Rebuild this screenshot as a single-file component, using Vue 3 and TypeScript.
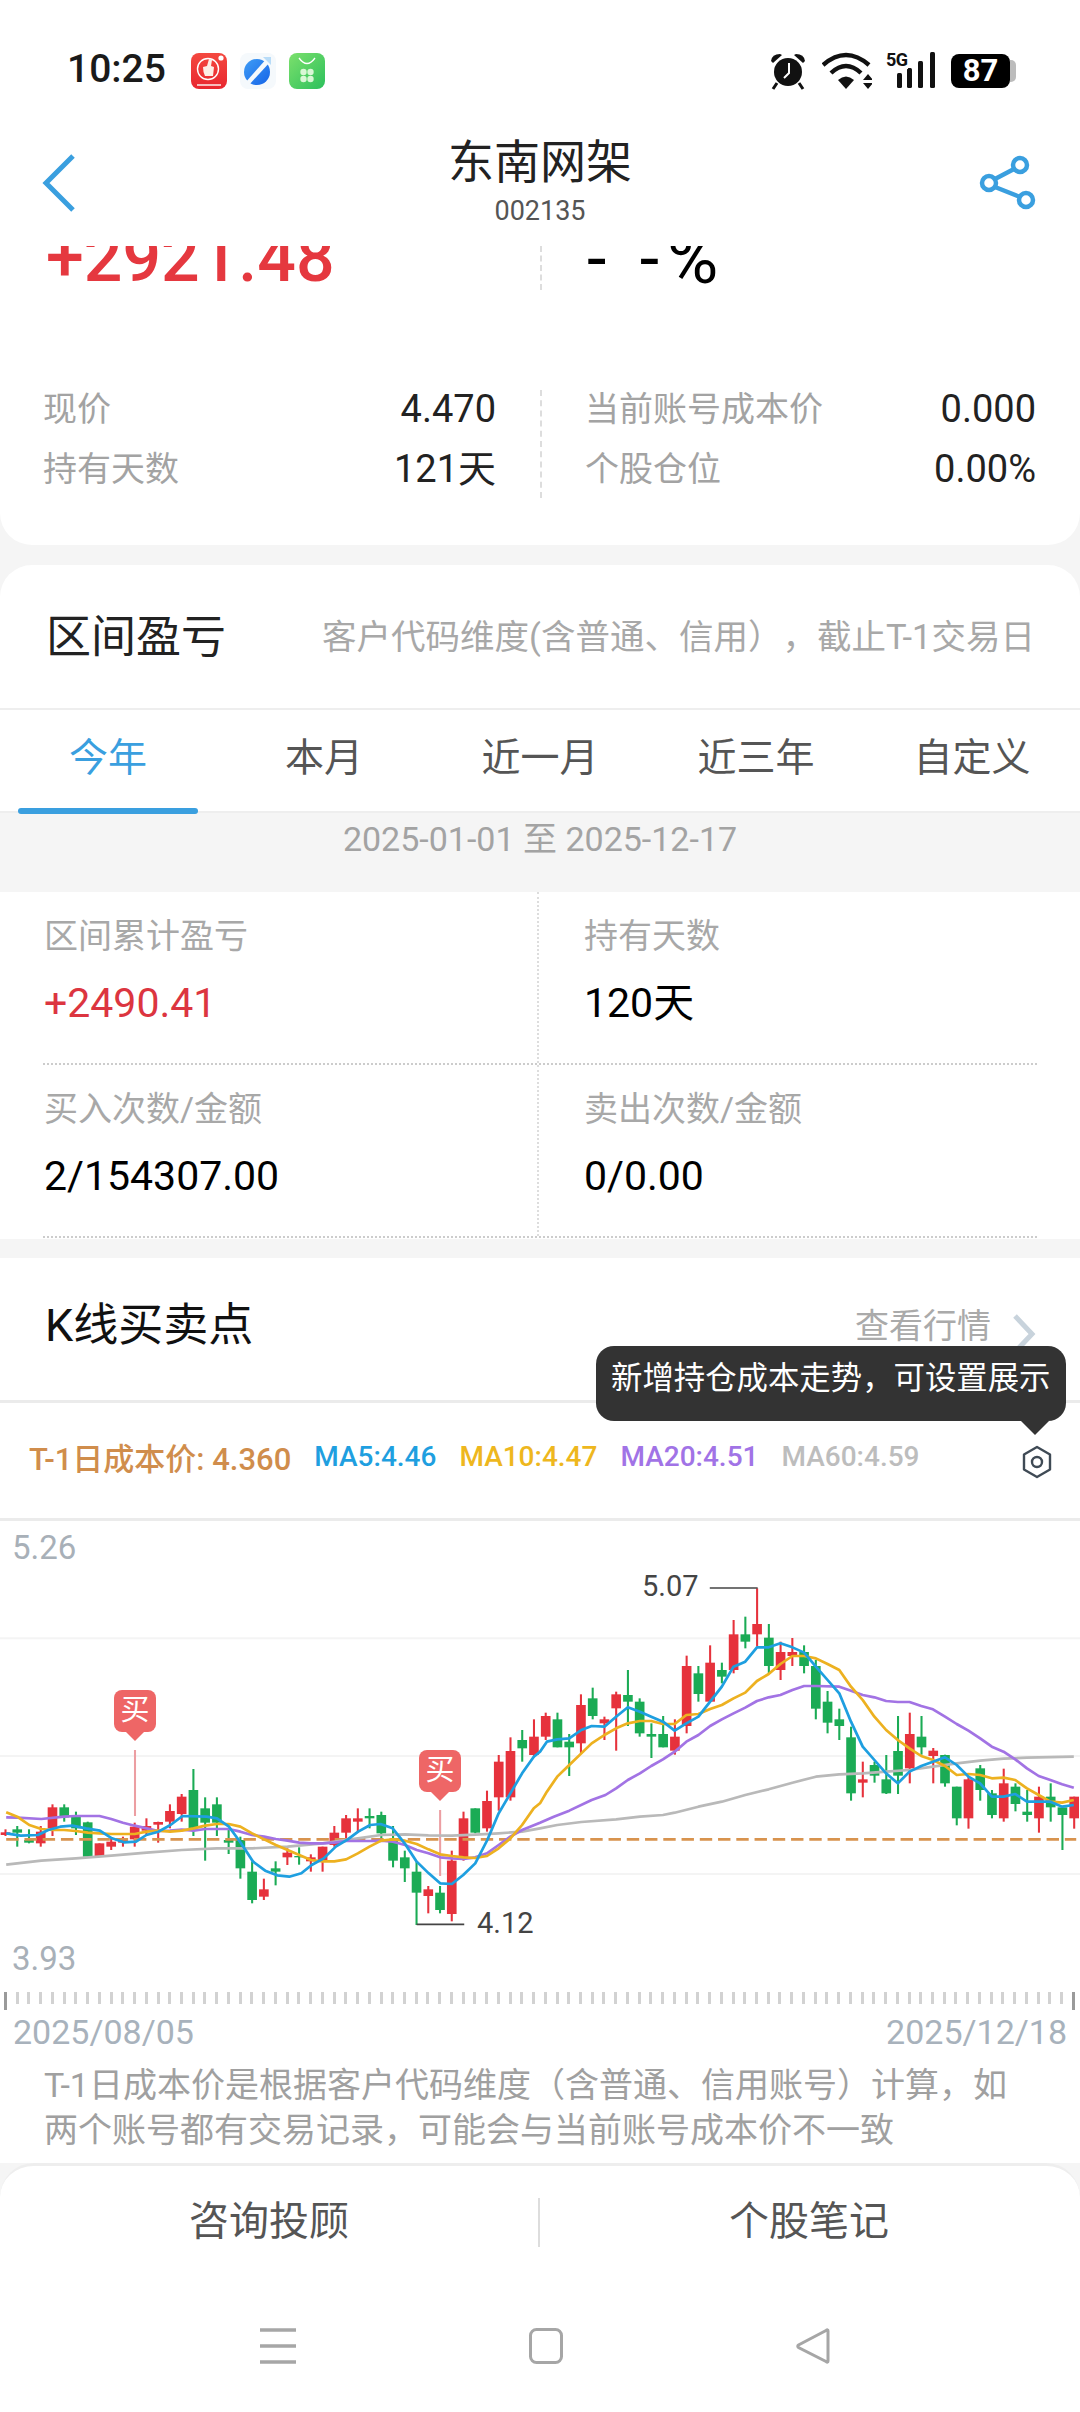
<template>
  <div class="page">
    <div class="status">
      <span class="time">10:25</span>
      <svg class="app-icon" width="36" height="36" viewBox="0 0 36 36">
        <defs>
          <linearGradient id="redIcon" x1="0" y1="0" x2="0" y2="1">
            <stop offset="0" stop-color="#f4483f" />
            <stop offset="1" stop-color="#e8262f" />
          </linearGradient>
        </defs>
        <rect width="36" height="36" rx="8" fill="url(#redIcon)" />
        <circle cx="17" cy="16" r="10.5" fill="none" stroke="#fff" stroke-width="1.4" />
        <path d="M12 14 L16 13 L18 6 L21 7 L20 13 L23 14 L22 23 L14 23 Q12 19 12 14Z" fill="#fdeee6" />
        <circle cx="30" cy="5" r="2.6" fill="#fff" />
        <rect x="6" y="31" width="24" height="2" fill="#f7bcbc" />
      </svg>
      <svg class="app-icon" width="36" height="36" viewBox="0 0 36 36">
        <defs>
          <linearGradient id="blueIcon" x1="0" y1="0" x2="1" y2="1">
            <stop offset="0" stop-color="#3f9df5" />
            <stop offset="1" stop-color="#1664e8" />
          </linearGradient>
        </defs>
        <rect width="36" height="36" rx="8" fill="#f5f9fc" />
        <circle cx="17" cy="19" r="13" fill="url(#blueIcon)" />
        <path d="M31 4 L28 4 L5 30 L8 33 L31 8Z" fill="#f5f9fc" />
        <path d="M23 4 L31 4 L31 12Z" fill="#b8dcf8" />
      </svg>
      <svg class="app-icon" width="36" height="36" viewBox="0 0 36 36">
        <defs>
          <linearGradient id="greenIcon" x1="0" y1="0" x2="1" y2="1">
            <stop offset="0" stop-color="#7ce06c" />
            <stop offset="1" stop-color="#2cc05c" />
          </linearGradient>
        </defs>
        <rect width="36" height="36" rx="8" fill="url(#greenIcon)" />
        <path d="M10 5 Q18 16 26 5" fill="none" stroke="#fff" stroke-width="1.3" />
        <circle cx="14.5" cy="19" r="3.2" fill="#d9f7d6" />
        <circle cx="21.5" cy="19" r="3.2" fill="#d9f7d6" />
        <circle cx="14.5" cy="26" r="3.2" fill="#d9f7d6" />
        <circle cx="21.5" cy="26" r="3.2" fill="#d9f7d6" />
      </svg>
      <div class="status-right">
        <svg class="alarm" width="38" height="38" viewBox="0 0 38 38">
          <circle cx="19" cy="20" r="14" fill="#111" />
          <path d="M2 9 Q3 2 11 2 L13 3 L4 11Z" fill="#111" />
          <path d="M36 9 Q35 2 27 2 L25 3 L34 11Z" fill="#111" />
          <path d="M8 31 L4 37 M30 31 L34 37" stroke="#111" stroke-width="3" />
          <path d="M20 11 L20 21 L15 26" fill="none" stroke="#fff" stroke-width="2" />
        </svg>
        <svg class="wifi" width="50" height="38" viewBox="0 0 50 38">
          <path d="M1 13 Q24 -7 47 13" fill="none" stroke="#111" stroke-width="4.4" />
          <path d="M9 21 Q24 7 39 21" fill="none" stroke="#111" stroke-width="4.4" />
          <path d="M16 28 L24 37 L32 28 Q24 21 16 28Z" fill="#111" />
          <path d="M41 28 L46 22 L51 28Z M41 31 L51 31 L46 37Z" fill="#111" />
        </svg>
        <div class="signal">
          <span class="net">5G</span>
          <svg width="40" height="36" viewBox="0 0 40 36">
            <rect x="0" y="21" width="5" height="15" rx="1.5" fill="#111" />
            <rect x="10" y="16" width="5" height="20" rx="1.5" fill="#111" />
            <rect x="21" y="9" width="5" height="27" rx="1.5" fill="#111" />
            <rect x="33" y="0" width="5" height="36" rx="1.5" fill="#111" />
          </svg>
        </div>
        <div class="battery"><span>87</span></div>
        <span class="battery-cap"></span>
      </div>
    </div>

    <header class="nav-bar">
      <svg class="back" width="34" height="58" viewBox="0 0 34 58">
        <path d="M31 2 L4 29 L31 56" fill="none" stroke="#3a9fdf" stroke-width="5" />
      </svg>
      <div class="title-box">
        <div class="title">东南网架</div>
        <div class="code">002135</div>
      </div>
      <svg class="share" width="58" height="56" viewBox="0 0 58 56">
        <circle cx="41" cy="10" r="7" fill="none" stroke="#3a9fdf" stroke-width="4.5" />
        <circle cx="10" cy="28" r="7" fill="none" stroke="#3a9fdf" stroke-width="4.5" />
        <circle cx="47" cy="45" r="7" fill="none" stroke="#3a9fdf" stroke-width="4.5" />
        <path d="M16 24 L35 14 M16 32 L41 42" stroke="#3a9fdf" stroke-width="4.5" />
      </svg>
    </header>

    <section class="holding">
      <div class="big-row">
        <div class="big-cell"><span class="big-num">+2921.48</span></div>
        <div class="big-cell right"><span class="big-rate">- -%</span></div>
      </div>
      <div class="detail">
        <div class="detail-col">
          <div class="detail-row"><span class="muted">现价</span><span>4.470</span></div>
          <div class="detail-row"><span class="muted">持有天数</span><span>121天</span></div>
        </div>
        <div class="detail-col right">
          <div class="detail-row"><span class="muted">当前账号成本价</span><span>0.000</span></div>
          <div class="detail-row"><span class="muted">个股仓位</span><span>0.00%</span></div>
        </div>
      </div>
    </section>

    <section class="range">
      <div class="range-head">
        <span class="sec-title">区间盈亏</span>
        <span class="range-tip">客户代码维度(含普通、信用），截止T-1交易日</span>
      </div>
      <div class="tabs">
        <div v-for="(tab, i) in tabs" :key="tab" class="tab" :class="{ active: i === 0 }">{{ tab }}</div>
      </div>
      <div class="date-band">2025-01-01 至 2025-12-17</div>
      <div class="stats">
        <div v-for="row in statRows" :key="row[0].label" class="stat-row">
          <div v-for="cell in row" :key="cell.label" class="stat">
            <div class="stat-label">{{ cell.label }}</div>
            <div class="stat-value" :class="{ up: cell.up }">{{ cell.value }}</div>
          </div>
        </div>
      </div>
    </section>

    <section class="kline">
      <div class="kline-head">
        <span class="sec-title dark">K线买卖点</span>
        <div class="more">
          <span>查看行情</span>
          <svg width="24" height="40" viewBox="0 0 24 40">
            <path d="M3 2 L20 20 L3 38" fill="none" stroke="#c8d3dc" stroke-width="5" />
          </svg>
        </div>
      </div>
      <div class="ma-row">
        <span class="cost">T-1日成本价: 4.360</span>
        <span v-for="ma in maLabels" :key="ma.text" :style="{ color: ma.color }">{{ ma.text }}</span>
        <svg class="hex" width="30" height="34" viewBox="0 0 30 34">
          <path d="M15 2 L28 9.5 L28 24.5 L15 32 L2 24.5 L2 9.5Z" fill="none" stroke="#3f4a55" stroke-width="2.4" stroke-linejoin="round" />
          <circle cx="15" cy="17" r="5" fill="none" stroke="#3f4a55" stroke-width="2.4" />
        </svg>
      </div>
      <div class="tooltip">新增持仓成本走势，可设置展示</div>

      <div class="chart">
        <svg class="plot" viewBox="0 3 3136 1413" preserveAspectRatio="none">
          <line v-for="y in [355, 708, 1062]" :key="y" x1="0" x2="3136" :y1="y" :y2="y" stroke="#f4f4f4" stroke-width="6" />
          <line x1="392" x2="392" y1="690" y2="888" stroke="#ec9ea2" stroke-width="6" />
          <line x1="1278" x2="1278" y1="870" y2="1068" stroke="#ec9ea2" stroke-width="6" />
          <g v-for="(c, i) in candles" :key="i" :fill="c[4] ? '#e6323c' : '#1bab55'">
            <rect :x="candleX(i) - 3" :y="c[0]" width="6" :height="c[1] - c[0]" />
            <rect :x="candleX(i) - 14" :y="c[2]" width="28" :height="c[3] - c[2]" />
          </g>
          <line x1="18" x2="3125" y1="958" y2="958" stroke="#d8934e" stroke-width="8" stroke-dasharray="36 17" />
          <polyline
            v-for="line in maLines"
            :key="line.color"
            :points="line.points"
            fill="none"
            :stroke="line.color"
            stroke-width="8"
            stroke-linejoin="round"
          />
          <line x1="2061" x2="2200" y1="204" y2="204" stroke="#444" stroke-width="5" />
          <line x1="1210" x2="1348" y1="1213" y2="1213" stroke="#444" stroke-width="5" />
        </svg>
        <span class="axis high">5.26</span>
        <span class="axis low">3.93</span>
        <span class="peak max">5.07</span>
        <span class="peak min">4.12</span>
        <div class="buy first">买</div>
        <div class="buy second">买</div>
      </div>

      <div class="ticks">
        <span v-for="n in 92" :key="n" class="tick" :class="{ edge: n === 1 || n === 92 }"></span>
      </div>
      <div class="dates"><span>2025/08/05</span><span>2025/12/18</span></div>
      <p class="note">T-1日成本价是根据客户代码维度（含普通、信用账号）计算，如两个账号都有交易记录，可能会与当前账号成本价不一致</p>
    </section>

    <footer class="bottom">
      <div class="actions">
        <div class="action">咨询投顾</div>
        <span class="action-line"></span>
        <div class="action">个股笔记</div>
      </div>
      <div class="sys-nav">
        <svg width="36" height="36" viewBox="0 0 36 36">
          <path d="M0 2 H36 M0 18 H36 M0 34 H36" stroke="#a6a6a6" stroke-width="3.6" />
        </svg>
        <svg width="34" height="36" viewBox="0 0 34 36">
          <rect x="1.5" y="1.5" width="31" height="33" rx="6" fill="none" stroke="#a6a6a6" stroke-width="3" />
        </svg>
        <svg width="34" height="36" viewBox="0 0 34 36">
          <path d="M32 3 Q32 1 30 2.5 L2.5 17 Q1 18 2.5 19.5 L30 33.5 Q32 35 32 33Z" fill="none" stroke="#a6a6a6" stroke-width="3" />
        </svg>
      </div>
    </footer>
  </div>
</template>

<script setup lang="ts">
interface Stat {
  label: string
  value: string
  up?: boolean
}

// [wick top, wick bottom, body top, body bottom, 1 = red]
type Candle = [number, number, number, number, number]

const tabs = ['今年', '本月', '近一月', '近三年', '自定义']

const statRows: Stat[][] = [
  [
    { label: '区间累计盈亏', value: '+2490.41', up: true },
    { label: '持有天数', value: '120天' }
  ],
  [
    { label: '买入次数/金额', value: '2/154307.00' },
    { label: '卖出次数/金额', value: '0/0.00' }
  ]
]

const maLabels = [
  { text: 'MA5:4.46', color: '#1f9fe0' },
  { text: 'MA10:4.47', color: '#eeb71e' },
  { text: 'MA20:4.51', color: '#a173e6' },
  { text: 'MA60:4.59', color: '#bdbdbd' }
]

const candles: Candle[] = [
  [928, 948, 937, 945, 1], [918, 980, 928, 938, 0], [928, 970, 960, 968, 0], [918, 980, 935, 970, 1],
  [853, 948, 862, 925, 1], [853, 905, 862, 892, 0], [875, 945, 890, 925, 0], [905, 1012, 907, 1010, 0],
  [970, 1010, 970, 1008, 1], [955, 990, 965, 980, 1], [950, 980, 955, 968, 1], [908, 980, 920, 958, 1],
  [895, 945, 918, 932, 1], [905, 968, 906, 914, 1], [853, 925, 873, 905, 1], [822, 905, 830, 882, 1],
  [747, 948, 810, 925, 0], [832, 1022, 865, 908, 0], [832, 948, 853, 908, 0], [930, 1002, 960, 968, 0],
  [950, 1076, 960, 1045, 0], [1024, 1150, 1055, 1140, 0], [1076, 1140, 1108, 1130, 1], [1024, 1096, 1045, 1055, 0],
  [985, 1035, 998, 1012, 1], [982, 1034, 1008, 1012, 0], [1003, 1055, 1012, 1024, 1], [980, 1055, 980, 1022, 1],
  [918, 980, 938, 975, 1], [885, 955, 895, 938, 1], [865, 938, 895, 905, 1], [865, 925, 888, 895, 0],
  [875, 960, 885, 940, 0], [918, 1042, 960, 1022, 0], [992, 1086, 1012, 1045, 0], [1024, 1215, 1055, 1118, 0],
  [1098, 1180, 1108, 1128, 1], [1098, 1180, 1118, 1170, 0], [992, 1204, 1022, 1182, 1], [875, 1022, 895, 1012, 1],
  [865, 940, 865, 938, 0], [812, 935, 843, 925, 1], [705, 872, 725, 832, 1], [652, 842, 693, 832, 1],
  [630, 725, 660, 685, 0], [598, 712, 650, 705, 1],
  [578, 660, 588, 650, 1], [578, 682, 598, 682, 0], [642, 768, 665, 682, 0], [523, 700, 555, 670, 1],
  [503, 598, 535, 588, 0], [590, 660, 598, 610, 1], [515, 692, 523, 565, 1], [450, 618, 525, 545, 0],
  [535, 650, 545, 640, 0], [610, 714, 642, 650, 0], [588, 682, 642, 682, 0], [598, 704, 650, 692, 1],
  [407, 640, 438, 618, 1], [438, 545, 460, 522, 0], [376, 545, 428, 545, 1], [428, 490, 450, 470, 0],
  [300, 460, 343, 450, 1], [290, 385, 343, 365, 0], [205, 380, 312, 343, 1], [312, 460, 353, 438, 0],
  [365, 480, 396, 450, 1], [354, 438, 396, 408, 1], [376, 460, 396, 438, 0], [420, 598, 438, 566, 0],
  [513, 640, 545, 608, 0], [566, 660, 598, 618, 0], [620, 842, 652, 820, 0], [725, 832, 778, 788, 1],
  [725, 788, 735, 767, 0], [705, 822, 778, 820, 0], [588, 822, 693, 767, 0], [578, 790, 642, 745, 1],
  [588, 704, 650, 682, 0], [684, 790, 692, 708, 1], [704, 800, 705, 790, 0], [800, 916, 800, 895, 0],
  [768, 926, 778, 895, 1], [735, 842, 745, 810, 0], [810, 895, 820, 885, 0], [746, 905, 790, 895, 1],
  [790, 874, 800, 852, 0], [810, 905, 875, 885, 0], [800, 938, 830, 895, 1], [790, 905, 830, 862, 0],
  [862, 990, 862, 885, 0], [830, 926, 830, 895, 1]
]

const candleX = (i: number) => 16 + i * 34.1

// the points were read off in two halves, the right half starts at x = 1568
const joinHalves = (left: string, right: string) => {
  const shifted = right
    .split(' ')
    .map(p => {
      const [x, y] = p.split(',').map(Number)
      return `${x + 1568},${y}`
    })
    .join(' ')
  return `${left} ${shifted}`
}

const maLines = [
  {
    color: '#b9b9b9',
    points: joinHalves(
      '18,1034 120,1022 220,1015 323,1007 426,998 528,990 630,985 732,985 835,980 937,970 1039,955 1107,945 1176,943 1244,946 1312,947 1380,944 1448,940 1516,935 1568,925',
      '50,915 120,906 221,898 290,890 357,885 391,878 460,860 528,845 596,825 664,808 733,788 801,770 869,763 937,760 1005,755 1073,750 1141,740 1210,730 1278,722 1346,716 1414,713 1550,710'
    )
  },
  {
    color: '#a273e4',
    points: joinHalves(
      '18,892 50,893 120,897 186,890 220,888 289,888 323,897 357,908 391,917 426,925 460,933 494,932 528,929 562,932 596,927 664,927 698,935 732,945 767,950 801,957 835,962 869,968 903,970 937,970 971,968 1005,963 1039,963 1073,963 1107,962 1141,965 1176,975 1210,990 1244,1000 1278,1012 1312,1015 1346,1017 1380,1012 1414,1000 1448,975 1482,950 1516,930 1568,908',
      '40,890 85,872 150,840 190,825 221,805 255,780 290,760 323,738 357,718 391,695 425,665 460,645 494,618 528,598 562,580 596,563 630,543 664,532 698,525 733,510 767,498 801,498 869,500 903,512 937,525 971,532 1005,543 1039,546 1073,546 1107,558 1141,568 1176,590 1210,612 1244,632 1278,655 1312,680 1346,695 1380,718 1414,745 1448,768 1482,780 1516,793 1550,803'
    )
  },
  {
    color: '#edb120',
    points: joinHalves(
      '18,877 50,890 85,915 120,927 152,930 186,930 220,933 255,938 289,940 323,942 357,942 391,942 426,935 460,932 494,935 528,932 562,925 596,917 630,912 664,912 698,920 732,940 767,958 801,975 835,990 869,1005 903,1020 937,1024 971,1024 1005,1018 1039,1000 1073,980 1107,962 1141,958 1176,962 1210,972 1244,988 1278,1003 1312,1008 1346,1012 1380,1014 1414,1008 1448,985 1482,955 1516,915 1550,865',
      '0,850 20,815 50,770 85,735 120,700 150,670 187,645 221,625 255,610 290,603 323,603 357,612 391,612 425,585 460,582 494,567 528,555 562,535 596,518 630,483 664,462 698,432 733,408 767,408 801,415 835,432 869,450 903,500 937,540 971,590 1005,630 1039,660 1073,685 1107,708 1141,720 1176,738 1210,765 1244,762 1278,765 1312,775 1346,773 1380,780 1414,805 1448,825 1482,845 1516,848 1550,840'
    )
  },
  {
    color: '#1e9fe0',
    points: joinHalves(
      '18,940 60,947 110,945 140,930 175,920 210,917 250,925 290,932 325,955 360,967 395,965 425,945 460,935 495,915 530,888 600,890 630,895 665,920 700,970 735,1025 770,1052 805,1066 840,1070 875,1060 905,1035 940,1015 975,980 1010,958 1040,935 1075,915 1105,912 1140,925 1175,970 1210,1025 1245,1060 1278,1090 1312,1092 1345,1065 1380,1030 1415,960 1448,880 1482,820 1516,760 1550,710',
      '0,695 20,665 50,658 85,655 120,630 150,618 187,620 221,590 255,562 290,575 323,590 357,605 391,632 425,610 460,590 494,545 528,500 562,440 596,425 630,382 664,382 698,370 733,382 767,398 801,440 835,480 869,520 903,605 937,680 971,720 1005,760 1039,790 1073,755 1107,738 1141,725 1176,712 1210,735 1244,770 1278,790 1312,830 1346,830 1380,822 1414,845 1448,845 1482,845 1516,860 1550,855'
    )
  }
]
</script>

<style>
html,
body {
  margin: 0;
  background: #f5f5f5;
  overflow: hidden;
}
</style>

<style scoped>
.page {
  position: relative;
  width: 1080px;
  height: 2412px;
  overflow: hidden;
  background: #f5f5f5;
  font-family: Roboto, "Noto Sans CJK SC", sans-serif;
  text-spacing-trim: space-all;
  color: #111;
}

/* status bar */
.status {
  height: 110px;
  box-sizing: border-box;
  padding: 53px 0 0 67px;
  background: #fff;
  display: flex;
  align-items: flex-start;
}

.time {
  width: 124px;
  font-size: 39px;
  line-height: 32px;
  font-weight: 500;
  color: #1a1a1a;
}

.app-icon {
  margin-right: 13px;
}

.status-right {
  position: absolute;
  top: 52px;
  left: 769px;
  display: flex;
  align-items: flex-start;
}

.alarm {
  margin-right: 15px;
}

.wifi {
  margin-right: 14px;
}

.signal {
  position: relative;
  width: 50px;
  height: 36px;
  margin-right: 15px;
}

.signal svg {
  position: absolute;
  left: 11px;
  top: 0;
}

.net {
  position: absolute;
  left: 0;
  top: -1px;
  font-size: 18px;
  line-height: 18px;
  font-weight: 700;
  letter-spacing: -0.5px;
  background: #fff;
  z-index: 1;
  color: #111;
}

.battery {
  width: 59px;
  height: 34px;
  margin-top: 2px;
  border-radius: 8px;
  background: #000;
  color: #fff;
  font-size: 31px;
  font-weight: 700;
  line-height: 34px;
  text-align: center;
}

.battery-cap {
  width: 6px;
  height: 22px;
  margin-top: 8px;
  border-radius: 0 5px 5px 0;
  background: #bcbcbc;
}

/* title bar */
.nav-bar {
  position: relative;
  height: 136px;
  background: #fff;
  display: flex;
  justify-content: center;
}

.back {
  position: absolute;
  left: 42px;
  top: 44px;
}

.share {
  position: absolute;
  left: 979px;
  top: 45px;
}

.title-box {
  padding-top: 24px;
  text-align: center;
}

.title {
  font-size: 46px;
  line-height: 56px;
  color: #222;
}

.code {
  margin-top: 4px;
  font-size: 27px;
  line-height: 34px;
  color: #555;
}

/* holding card */
.holding {
  height: 299px;
  background: #fff;
  border-radius: 0 0 32px 32px;
}

.big-row {
  display: flex;
  height: 44px;
  overflow: hidden;
}

.big-cell {
  width: 540px;
  box-sizing: border-box;
  padding-left: 46px;
}

.big-cell.right {
  padding-left: 45px;
  border-left: 2px dashed #ddd;
}

.big-num {
  display: block;
  margin-top: -22px;
  font-size: 68px;
  line-height: 68px;
  font-weight: 500;
  color: #e5383f;
}

.big-rate {
  display: block;
  margin-top: -22px;
  font-size: 70px;
  line-height: 70px;
  letter-spacing: 8px;
  color: #000;
}

.detail {
  display: flex;
  margin-top: 100px;
}

.detail-col {
  width: 540px;
  height: 108px;
  box-sizing: border-box;
  padding: 0 44px 0 43px;
}

.detail-col.right {
  padding: 0 44px 0 43px;
  border-left: 2px dashed #ddd;
}

.detail-row {
  display: flex;
  justify-content: space-between;
  height: 60px;
  line-height: 60px;
  font-size: 38px;
  color: #222;
}

.detail-row:first-child {
  margin-top: -11px;
}

.muted {
  font-size: 34px;
  color: #a3a3a3;
}

/* range card */
.range {
  margin-top: 20px;
  border-radius: 32px 32px 0 0;
  background: #fff;
}

.range-head {
  display: flex;
  justify-content: space-between;
  align-items: center;
  height: 145px;
  box-sizing: border-box;
  padding: 0 45px 6px 46px;
  border-bottom: 2px solid #eee;
}

.sec-title {
  font-size: 45px;
  color: #222;
}

.sec-title.dark {
  color: #111;
}

.range-tip {
  font-size: 34.5px;
  color: #a8a8a8;
}

.tabs {
  position: relative;
  display: grid;
  grid-template-columns: repeat(5, 216px);
  height: 103px;
  box-sizing: border-box;
  border-bottom: 2px solid #eee;
}

.tab {
  height: 100px;
  padding-top: 22px;
  box-sizing: border-box;
  text-align: center;
  font-size: 39px;
  line-height: 52px;
  color: #555;
}

.tab.active {
  color: #3a9fdf;
}

.tab.active::after {
  content: "";
  display: block;
  width: 180px;
  height: 6px;
  margin: 24px 0 0 18px;
  border-radius: 3px;
  background: #3a9fdf;
}

.date-band {
  height: 79px;
  background: #f5f5f5;
  text-align: center;
  font-size: 34px;
  line-height: 52px;
  color: #a3a3a3;
}

.stats {
  height: 347px;
  padding: 0 43px;
  background: #fff;
}

.stat-row {
  display: grid;
  grid-template-columns: 496px 1fr;
  height: 173px;
  box-sizing: border-box;
  border-bottom: 2px dotted #ccc;
}

.stat {
  padding-top: 20px;
}

.stat:first-child {
  box-sizing: border-box;
  padding-left: 1px;
  border-right: 2px dotted #ddd;
}

.stat:last-child {
  padding-left: 45px;
}

.stat-label {
  font-size: 34px;
  line-height: 48px;
  color: #a8a8a8;
}

.stat-value {
  margin-top: 19px;
  font-size: 41px;
  line-height: 48px;
  color: #000;
}

.stat-value.up {
  color: #dc3540;
}

/* k line card */
.kline {
  position: relative;
  margin-top: 19px;
  height: 905px;
  background: #fff;
}

.kline-head {
  display: flex;
  justify-content: space-between;
  height: 145px;
  box-sizing: border-box;
  padding: 33px 44px 0 45px;
  border-bottom: 3px solid #ebebeb;
  line-height: 70px;
}

.more {
  display: flex;
  height: 70px;
  align-items: center;
  font-size: 34px;
  color: #aaa;
}

.more svg {
  margin: 16px 0 0 21px;
}

.ma-row {
  position: relative;
  display: flex;
  align-items: center;
  gap: 23px;
  height: 118px;
  box-sizing: border-box;
  padding: 0 0 8px 29px;
  border-bottom: 3px solid #ebebeb;
  font-size: 28px;
  font-weight: 500;
}

.cost {
  font-size: 31px;
  color: #d08d4c;
}

.hex {
  position: absolute;
  left: 1022px;
  top: 42px;
}

.tooltip {
  position: absolute;
  left: 596px;
  top: 88px;
  width: 470px;
  height: 75px;
  box-sizing: border-box;
  padding: 0 15px;
  border-radius: 18px;
  background: #333;
  color: #fff;
  font-size: 31.4px;
  line-height: 66px;
  white-space: nowrap;
  z-index: 2;
}

.tooltip::after {
  content: "";
  position: absolute;
  left: 425px;
  top: 75px;
  border-left: 14px solid transparent;
  border-right: 14px solid transparent;
  border-top: 14px solid #333;
}

.chart {
  position: relative;
  height: 471px;
}

.plot {
  display: block;
  width: 1080px;
  height: 471px;
}

.axis {
  position: absolute;
  left: 12px;
  font-size: 33px;
  line-height: 40px;
  color: #a8b0b8;
}

.axis.high {
  top: 7px;
}

.axis.low {
  top: 418px;
}

.peak {
  position: absolute;
  font-size: 29px;
  line-height: 36px;
  color: #444;
}

.peak.max {
  left: 642px;
  top: 47px;
}

.peak.min {
  left: 477px;
  top: 384px;
}

.buy {
  position: absolute;
  width: 42px;
  height: 42px;
  border-radius: 8px;
  background: #ee6666;
  color: #fff;
  font-size: 29px;
  line-height: 41px;
  text-align: center;
}

.buy::after {
  content: "";
  position: absolute;
  left: 12px;
  top: 42px;
  border-left: 9px solid transparent;
  border-right: 9px solid transparent;
  border-top: 9px solid #ee6666;
}

.buy.first {
  left: 114px;
  top: 169px;
}

.buy.second {
  left: 419px;
  top: 229px;
}

.ticks {
  display: flex;
  justify-content: space-between;
  height: 18px;
  padding: 0 4px;
}

.tick {
  width: 3px;
  height: 12px;
  background: #d2d2d2;
}

.tick.edge {
  height: 18px;
  background: #9a9a9a;
}

.dates {
  display: flex;
  justify-content: space-between;
  padding: 0 13px;
  font-size: 34px;
  line-height: 44px;
  color: #a8b2bc;
}

.note {
  margin: 9px 0 0;
  padding: 0 44px;
  font-size: 34px;
  line-height: 45px;
  color: #a0a0a0;
}

/* bottom bar */
.bottom {
  height: 249px;
  box-sizing: border-box;
  border-top: 3px solid #eee;
  border-radius: 34px 34px 0 0;
  background: #fff;
}

.actions {
  display: flex;
  align-items: center;
  height: 104px;
}

.action {
  width: 538px;
  text-align: center;
  font-size: 40px;
  color: #555;
}

.action-line {
  width: 2px;
  height: 49px;
  margin-top: 8px;
  background: #ddd;
}

.sys-nav {
  display: flex;
  gap: 233px;
  padding: 58px 0 0 260px;
}
</style>
